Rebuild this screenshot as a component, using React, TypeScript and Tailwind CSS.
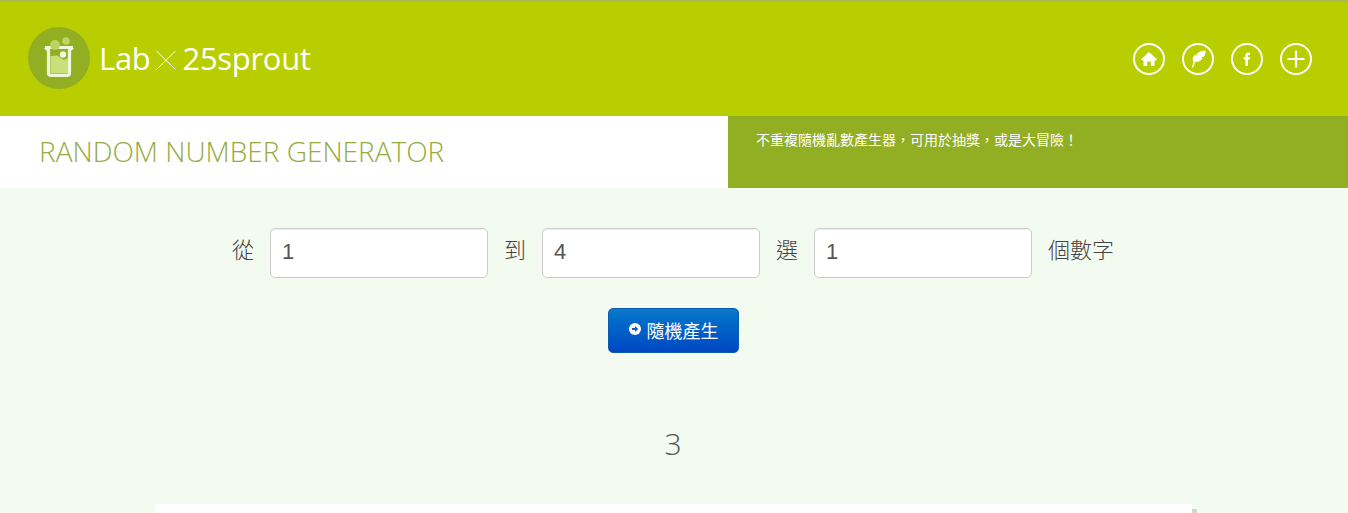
import React from "react";

const cjk = "font-['Noto_Sans_CJK_TC','Noto_Sans_CJK_SC',sans-serif]";

function Ring({ children }: { children: React.ReactNode }) {
  return (
    <div className="w-8 h-8 rounded-full border-2 border-white flex items-center justify-center text-white">
      {children}
    </div>
  );
}

function Field({ value }: { value: string }) {
  return (
    <input
      readOnly
      value={value}
      className="w-[218px] h-[50px] bg-white border border-[#ccc] rounded-[5px] px-[11px] pb-[2px] text-[22px] text-[#555] font-['Liberation_Sans',sans-serif] outline-none shadow-[inset_0_1px_1px_rgba(0,0,0,0.075)]"
    />
  );
}

function Label({ children }: { children: React.ReactNode }) {
  return <span className={`text-[22px] font-light leading-none text-[#444] -mt-[10px] ${cjk}`}>{children}</span>;
}

export default function App() {
  return (
    <div className="h-[513px] overflow-hidden bg-[#f3faef] flex flex-col font-['Open_Sans',sans-serif]">
      <header className="h-[116px] shrink-0 bg-[#b8ce00] border-t-2 border-[#a9b84f] flex items-center justify-between pl-[28px] pr-[36px]">
        <div className="flex items-center gap-[9px] -mt-[2px]">
          <svg width="62" height="62" viewBox="0 0 62 62">
            <circle cx="31" cy="31" r="31" fill="#92ae23" />
            <path d="M17 20.5 H45 M17 20.5 L20.5 23 V46 a2.5 2.5 0 0 0 2.5 2.5 H39 a2.5 2.5 0 0 0 2.5 -2.5 V23 L45 20.5" fill="none" stroke="#f1f7da" strokeWidth="3.2" strokeLinejoin="round" />
            <path d="M22.5 29 L29 28.5 L36 33 L40 31 V46.5 H22.5 Z" fill="#c8e07a" />
            <circle cx="38" cy="14" r="3.8" fill="#bdd463" />
            <circle cx="27" cy="18" r="5" fill="#bdd463" />
            <circle cx="35" cy="27.5" r="3.2" fill="#f1f7da" />
          </svg>
          <div className="flex items-center text-white leading-none tracking-[-0.3px]">
            <span className="text-[31px] font-normal">Lab</span>
            <svg width="24" height="24" viewBox="0 0 24 24" className="ml-[4px] mr-[4px] mt-[4px]">
              <path d="M2.5 3 L21.5 21.5 M21.5 3 L2.5 21.5" stroke="#fff" strokeWidth="1" fill="none" />
            </svg>
            <span className="font-normal text-[31px]">25sprout</span>
          </div>
        </div>
        <div className="flex items-center gap-[17px]">
          <Ring>
            <svg width="18" height="18" viewBox="0 0 18 18" fill="#fff">
              <path d="M9 2 L17 9.3 L16 10.5 H14.5 V16 H10.8 V11.5 H7.2 V16 H3.5 V10.5 H2 L1 9.3 Z" />
            </svg>
          </Ring>
          <Ring>
            <svg width="28" height="28" viewBox="0 0 28 28" fill="#fff">
              <path d="M8 22.5 L9.5 17 C7.5 14 9.5 10.5 12 9 L12.8 11 L13.5 8 C15.5 6.5 18 5.5 21.5 5.5 C21.8 8 21 10.5 19.5 12 L17.5 11.8 L18.5 13.5 C17 16 14 17.5 11 17 L9.5 22.5 Z" />
            </svg>
          </Ring>
          <Ring>
            <svg width="18" height="18" viewBox="0 0 18 18" fill="#fff">
              <path d="M7.4 16 V9.6 H5.6 V7.2 H7.4 V5.6 C7.4 3.6 8.5 2.6 10.3 2.6 H12 V5 H10.9 C10.2 5 10 5.3 10 6 V7.2 H12 L11.7 9.6 H10 V16 Z" />
            </svg>
          </Ring>
          <Ring>
            <svg width="20" height="20" viewBox="0 0 20 20">
              <path d="M10 1.5 V18.5 M1.5 10 H18.5" stroke="#fff" strokeWidth="2.2" fill="none" />
            </svg>
          </Ring>
        </div>
      </header>

      <section className="h-[72px] shrink-0 flex">
        <div className="w-[728px] bg-white pl-[39px] flex items-center">
          <h1 className="text-[28px] font-light leading-none text-[#94ab40] -mt-[3px]">RANDOM NUMBER GENERATOR</h1>
        </div>
        <div className="flex-1 bg-[#92ae23] pl-[28px] pt-[14px]">
          <p className={`text-[14px] leading-[18px] text-white ${cjk}`}>不重複隨機亂數產生器，可用於抽獎，或是大冒險！</p>
        </div>
      </section>

      <main className="flex-1 flex flex-col items-center min-h-0">
        <div className="flex items-center gap-[16px] mt-[40px] pr-[2px] shrink-0">
          <Label>從</Label>
          <Field value="1" />
          <Label>到</Label>
          <Field value="4" />
          <Label>選</Label>
          <Field value="1" />
          <Label>個數字</Label>
        </div>
        <button className="mt-[30px] shrink-0 w-[131px] h-[45px] mr-[2px] rounded-[5px] border border-[#0a5ab0] bg-gradient-to-b from-[#0b78c9] to-[#0046c4] flex items-center justify-center gap-[6px] text-white">
          <svg width="12" height="12" viewBox="0 0 12 12" className="-mt-[3px] ml-[1px]">
            <circle cx="6" cy="6" r="6" fill="#fff" />
            <path d="M3 5 H6 V3 L9.3 6 L6 9 V7 H3 Z" fill="#0a5fc6" />
          </svg>
          <span className={`text-[18px] leading-none -mt-[2px] ${cjk}`}>隨機產生</span>
        </button>
        <div className="mt-[71px] mr-[2px] shrink-0 text-[30px] font-light leading-[40px] text-[#555]">3</div>
        <div className="mt-[40px] flex pl-[4px] items-start shrink-0">
          <div className="w-[1037px] h-[40px] bg-white" />
          <div className="mt-[5px] w-[5px] h-[35px] bg-[#d3d6d1]" />
        </div>
      </main>
    </div>
  );
}
